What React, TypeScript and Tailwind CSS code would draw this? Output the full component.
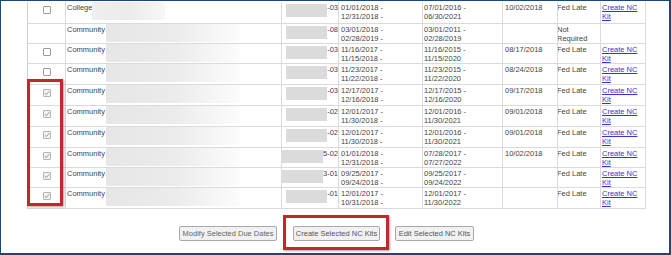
import React from "react";

type Row = {
  h: string;
  cb: "none" | "off" | "on";
  name: string;
  first?: boolean;
  id: string;
  d1: [string, string];
  d2: [string, string];
  due: string;
  status: string[];
  link: boolean;
};

const rows: Row[] = [
  { h: "h-[22px]", cb: "off", name: "College", first: true, id: "-03", d1: ["01/01/2018 -", "12/31/2018 -"], d2: ["07/01/2016 -", "06/30/2021"], due: "10/02/2018", status: ["Fed Late"], link: true },
  { h: "h-[20px]", cb: "none", name: "Community", id: "-08", d1: ["03/01/2018 -", "02/28/2019 -"], d2: ["03/01/2011 -", "02/28/2019"], due: "", status: ["Not", "Required"], link: false },
  { h: "h-[20px]", cb: "off", name: "Community", id: "-03", d1: ["11/16/2017 -", "11/15/2018 -"], d2: ["11/16/2015 -", "11/15/2020"], due: "08/17/2018", status: ["Fed Late"], link: true },
  { h: "h-[21px]", cb: "off", name: "Community", id: "-03", d1: ["11/23/2017 -", "11/22/2018 -"], d2: ["11/23/2015 -", "11/22/2020"], due: "08/24/2018", status: ["Fed Late"], link: true },
  { h: "h-[21px]", cb: "on", name: "Community", id: "-03", d1: ["12/17/2017 -", "12/16/2018 -"], d2: ["12/17/2015 -", "12/16/2020"], due: "09/17/2018", status: ["Fed Late"], link: true },
  { h: "h-[21px]", cb: "on", name: "Community", id: "-02", d1: ["12/01/2017 -", "11/30/2018 -"], d2: ["12/01/2016 -", "11/30/2021"], due: "09/01/2018", status: ["Fed Late"], link: true },
  { h: "h-[21px]", cb: "on", name: "Community", id: "-02", d1: ["12/01/2017 -", "11/30/2018 -"], d2: ["12/01/2016 -", "11/30/2021"], due: "09/01/2018", status: ["Fed Late"], link: true },
  { h: "h-[20px]", cb: "on", name: "Community", id: "5-02", d1: ["01/01/2018 -", "12/31/2018 -"], d2: ["07/28/2017 -", "07/27/2022"], due: "10/02/2018", status: ["Fed Late"], link: true },
  { h: "h-[20px]", cb: "on", name: "Community", id: "3-01", d1: ["09/25/2017 -", "09/24/2018 -"], d2: ["09/25/2017 -", "09/24/2022"], due: "", status: ["Fed Late"], link: true },
  { h: "h-[21px]", cb: "on", name: "Community", id: "-01", d1: ["12/01/2017 -", "10/31/2018 -"], d2: ["12/01/2017 -", "11/30/2022"], due: "", status: ["Fed Late"], link: true },
];

function Checkbox({ checked }: { checked: boolean }) {
  if (!checked) {
    return <div className="w-[8px] h-[8px] border border-[#9c9c9c] bg-white rounded-[1px]" />;
  }
  return (
    <div className="w-[8px] h-[8px] border border-[#b4b4b4] bg-[#f3f3f3] rounded-[1px] flex items-center justify-center">
      <svg width="6" height="6" viewBox="0 0 6 6">
        <path d="M0.8 3.1 L2.4 4.6 L5.3 1.2" fill="none" stroke="#8d8d8d" strokeWidth="0.9" />
      </svg>
    </div>
  );
}

const cell = "border-r border-b border-[#dadada] overflow-hidden";

export default function App() {
  return (
    <div
      className="relative w-[671px] h-[255px] bg-white border-l border-t border-r-2 border-b-2 border-[#174a78] pl-[26px] pt-[1px] text-[#444444] text-[7.5px] leading-[9px]"
      style={{ fontFamily: '"Liberation Sans", Arial, sans-serif' }}
    >
      <div className="w-[619px] border-l border-[#d2d2d2]">
        {rows.map((r, i) => (
          <div key={i} className={`grid grid-cols-[38px_216px_57px_84px_80px_55px_43px_45px] ${r.h}`}>
            <div className={`${cell} flex justify-center pt-[4px]`}>
              {r.cb !== "none" && <Checkbox checked={r.cb === "on"} />}
            </div>
            <div className={`${cell} flex items-start pl-[1px] pt-[1px]`}>
              <span className="shrink-0">{r.name}</span>
              {r.first ? (
                <div className="shrink-0 -mt-[1px] w-[73px] h-[18px] bg-linear-to-r from-[#efefef] via-[#ebebeb] to-[#f7f7f7]" />
              ) : (
                <div className="shrink-0 ml-[1px] -mt-[1px] w-[134px] h-[18px] bg-linear-to-r from-[#e6e6e6] via-[#ebebeb] to-[#fcfcfc]" />
              )}
            </div>
            <div className={`${cell} flex items-start justify-end pt-[1px]`}>
              <div className="shrink-0 mt-[1px] w-[41px] h-[13px] bg-[#dbdbdb]" />
              <span className="shrink-0">{r.id}</span>
            </div>
            <div className={`${cell} pl-[2px] pt-[1px]`}>
              <div>{r.d1[0]}</div>
              <div>{r.d1[1]}</div>
            </div>
            <div className={`${cell} pl-[1px] pt-[1px]`}>
              <div>{r.d2[0]}</div>
              <div>{r.d2[1]}</div>
            </div>
            <div className={`${cell} pl-[2px] pt-[1px]`}>{r.due}</div>
            <div className={`${cell} pl-0 pt-[1px] indent-[-1px]`}>
              {r.status.map((s, k) => (
                <div key={k}>{s}</div>
              ))}
            </div>
            <div className={`${cell} pl-[1px] pt-[1px]`}>
              {r.link && (
                <a href="#" className="text-[#3434dc] underline">
                  Create NC
                  <br />
                  Kit
                </a>
              )}
            </div>
          </div>
        ))}
      </div>

      <div className="flex pl-[152px] mt-[17px] gap-[16px]">
        <button className="w-[98px] h-[15px] bg-[#f1f1f1] border border-[#a9a9a9] rounded-[2px] text-[7.5px] leading-none text-[#666666]">
          Modify Selected Due Dates
        </button>
        <button className="w-[87px] h-[15px] bg-[#f1f1f1] border border-[#a9a9a9] rounded-[2px] text-[7.5px] leading-none text-[#555555]">
          Create Selected NC Kits
        </button>
        <button className="w-[79px] h-[15px] bg-[#f1f1f1] border border-[#a9a9a9] rounded-[2px] text-[7.5px] leading-none text-[#555555] -ml-[1px]">
          Edit Selected NC Kits
        </button>
      </div>

      <div className="absolute left-[26px] top-[78px] w-[36px] h-[127px] border-[3px] border-[#c1272d] shadow-[1px_1px_2px_rgba(0,0,0,0.35)]" />
      <div className="absolute left-[282px] top-[214px] w-[106px] h-[35px] border-[3px] border-[#c1272d] shadow-[1px_1px_2px_rgba(0,0,0,0.35)]" />
    </div>
  );
}
